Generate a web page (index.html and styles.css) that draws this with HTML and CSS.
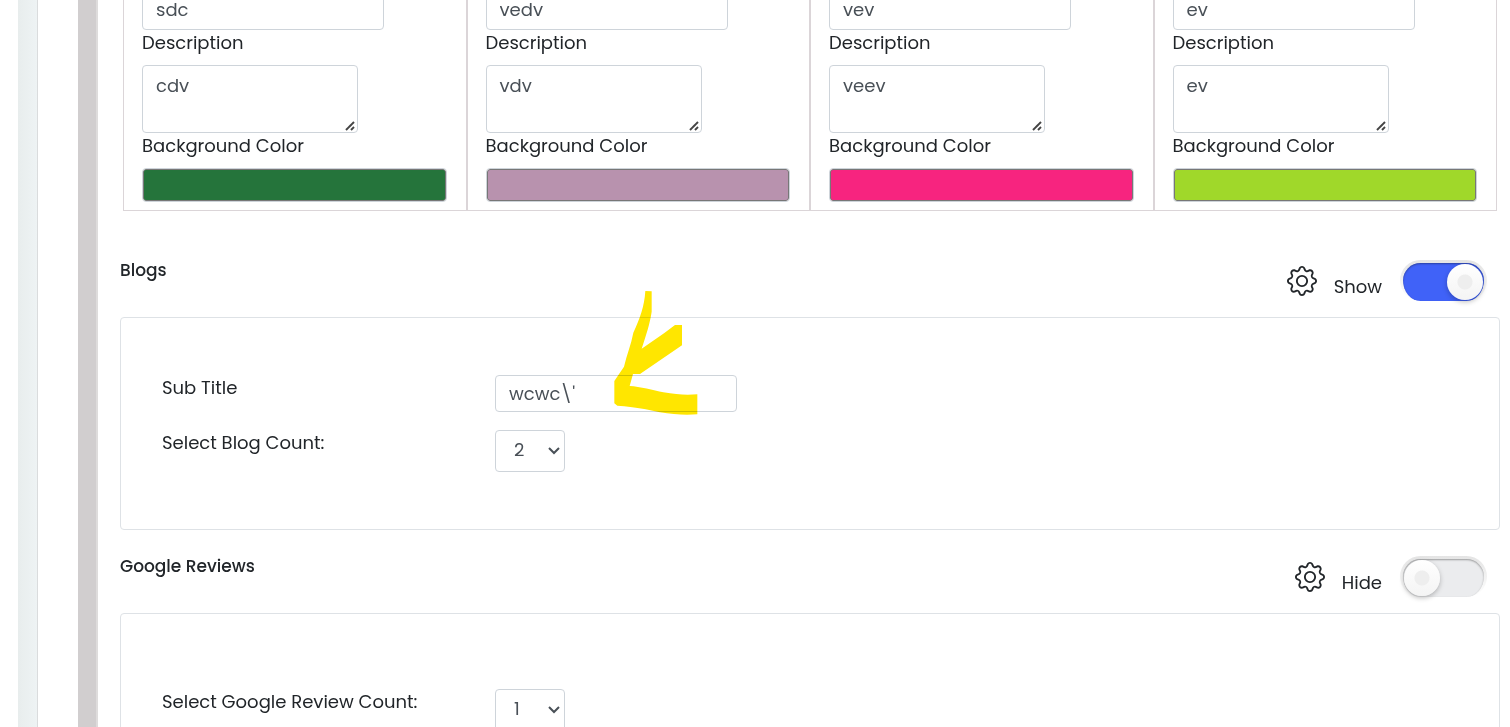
FILE: index.html
```html
<!DOCTYPE html>
<html lang="en">
<head>
  <meta charset="UTF-8" />
  <title>Home Page Settings</title>
  <link rel="stylesheet" href="styles.css">
</head>
<body>
  <svg class="icon-defs" aria-hidden="true">
    <symbol id="gear" viewBox="0 0 16 16">
      <path d="M8 4.754a3.246 3.246 0 1 0 0 6.492 3.246 3.246 0 0 0 0-6.492M5.754 8a2.246 2.246 0 1 1 4.492 0 2.246 2.246 0 0 1-4.492 0"/>
      <path d="M9.796 1.343c-.527-1.79-3.065-1.79-3.592 0l-.094.319a.873.873 0 0 1-1.255.52l-.292-.16c-1.64-.892-3.433.902-2.54 2.541l.159.292a.873.873 0 0 1-.52 1.255l-.319.094c-1.79.527-1.79 3.065 0 3.592l.319.094a.873.873 0 0 1 .52 1.255l-.16.292c-.892 1.64.901 3.434 2.541 2.54l.292-.159a.873.873 0 0 1 1.255.52l.094.319c.527 1.79 3.065 1.79 3.592 0l.094-.319a.873.873 0 0 1 1.255-.52l.292.16c1.64.893 3.434-.902 2.54-2.541l-.159-.292a.873.873 0 0 1 .52-1.255l.319-.094c1.79-.527 1.79-3.065 0-3.592l-.319-.094a.873.873 0 0 1-.52-1.255l.16-.292c.893-1.64-.902-3.433-2.541-2.54l-.292.159a.873.873 0 0 1-1.255-.52zm-2.633.283c.246-.835 1.428-.835 1.674 0l.094.319a1.873 1.873 0 0 0 2.693 1.115l.291-.16c.764-.415 1.6.42 1.184 1.185l-.159.292a1.873 1.873 0 0 0 1.116 2.692l.318.094c.835.246.835 1.428 0 1.674l-.319.094a1.873 1.873 0 0 0-1.115 2.693l.16.291c.415.764-.42 1.6-1.185 1.184l-.291-.159a1.873 1.873 0 0 0-2.693 1.116l-.094.318c-.246.835-1.428.835-1.674 0l-.094-.319a1.873 1.873 0 0 0-2.692-1.115l-.292.16c-.764.415-1.6-.42-1.184-1.185l.159-.291A1.873 1.873 0 0 0 1.945 8.93l-.319-.094c-.835-.246-.835-1.428 0-1.674l.319-.094A1.873 1.873 0 0 0 3.06 4.377l-.16-.292c-.415-.764.42-1.6 1.185-1.184l.292.159a1.873 1.873 0 0 0 2.692-1.115z"/>
    </symbol>
  </svg>

  <div class="page">
    <div class="rail"></div>
    <div class="divider"></div>

    <main class="content">
      <div class="cards">
        <div class="card">
          <input type="text" class="input-field title-field" aria-label="Title 1" value="sdc" />
          <label for="description1">Description</label>
          <textarea id="description1" class="input-field text-area">cdv</textarea>
          <label for="color1">Background Color</label>
          <input type="color" id="color1" class="color-field" value="#25743b" />
        </div>
        <div class="card">
          <input type="text" class="input-field title-field" aria-label="Title 2" value="vedv" />
          <label for="description2">Description</label>
          <textarea id="description2" class="input-field text-area">vdv</textarea>
          <label for="color2">Background Color</label>
          <input type="color" id="color2" class="color-field" value="#b892ae" />
        </div>
        <div class="card">
          <input type="text" class="input-field title-field" aria-label="Title 3" value="vev" />
          <label for="description3">Description</label>
          <textarea id="description3" class="input-field text-area">veev</textarea>
          <label for="color3">Background Color</label>
          <input type="color" id="color3" class="color-field" value="#f7247f" />
        </div>
        <div class="card">
          <input type="text" class="input-field title-field" aria-label="Title 4" value="ev" />
          <label for="description4">Description</label>
          <textarea id="description4" class="input-field text-area">ev</textarea>
          <label for="color4">Background Color</label>
          <input type="color" id="color4" class="color-field" value="#a0d82a" />
        </div>
      </div>

      <section>
        <div class="section-head">
          <h2>Blogs</h2>
          <div class="controls">
            <button type="button" class="gear-button" aria-label="Blogs settings"><svg><use href="#gear"/></svg></button>
            <label for="blogsToggle">Show</label>
            <input type="checkbox" id="blogsToggle" class="toggle" checked />
          </div>
        </div>
        <div class="panel">
          <div class="row">
            <label for="subTitle">Sub Title</label>
            <div class="marked">
              <input type="text" id="subTitle" class="input-field" value="wcwc\'" />
              <svg class="marker" viewBox="396 24 264 390" aria-hidden="true">
                <path d="M496 33L515 34L515 95C510 130 497 170 485 206L552 160L585 135L606 135L606 196L480 282L459 282L449 318C480 320 520 330 550 337C590 344 620 346 652 343L652 403C620 406 580 404 540 397C500 388 470 381 412 377L403 370L403 303L432 260C440 225 453 195 460 158C480 115 493 80 496 33Z"/>
              </svg>
            </div>
          </div>
          <div class="row">
            <label for="blogCount">Select Blog Count:</label>
            <select id="blogCount" class="input-field count">
              <option>1</option>
              <option selected>2</option>
              <option>3</option>
            </select>
          </div>
        </div>
      </section>

      <section>
        <div class="section-head">
          <h2>Google Reviews</h2>
          <div class="controls">
            <button type="button" class="gear-button" aria-label="Google Reviews settings"><svg><use href="#gear"/></svg></button>
            <label for="reviewsToggle">Hide</label>
            <input type="checkbox" id="reviewsToggle" class="toggle" />
          </div>
        </div>
        <div class="panel panel-reviews">
          <div class="row">
            <label for="reviewCount">Select Google Review Count:</label>
            <select id="reviewCount" class="input-field count">
              <option selected>1</option>
              <option>2</option>
              <option>3</option>
            </select>
          </div>
        </div>
      </section>
    </main>
  </div>
</body>
</html>
```

FILE: styles.css
```css
* {
  box-sizing: border-box;
}

body {
  margin: 0;
  height: 100vh;
  overflow: hidden;
  background-color: #fff;
  color: #212529;
  font-family: Poppins, Inter, sans-serif;
  font-size: 18px;
  line-height: 26px;
}

.icon-defs {
  display: none;
}

.page {
  display: flex;
  height: 100vh;
  overflow: hidden;
}

.rail {
  flex: none;
  width: 20px;
  margin: 0 40px 0 18px;
  background: linear-gradient(to right, #e8eded, #eef3f4);
  border-right: 1px solid #dadcdd;
}

.divider {
  flex: none;
  width: 20px;
  background-color: #d1cecf;
  border-right: 2px solid #dedcdc;
}

.content {
  flex: 1;
  min-width: 0;
  padding: 0 10px 0 22px;
}

/* the row of cards runs off the top of the window */
.cards {
  display: grid;
  grid-template-columns: repeat(4, 1fr);
  margin: -13px 3px 23px;
}

.card {
  display: flex;
  flex-direction: column;
  align-items: flex-start;
  padding: 0 19px 8px 18px;
  border: 1px solid #dbd5d8;
}

.input-field {
  display: block;
  width: 242px;
  height: 37px;
  padding: 5px 13px;
  border: 1px solid #ced4da;
  border-radius: 4px;
  background-color: #fff;
  color: #495057;
  font: inherit;
}

.title-field {
  height: 42px;
}

.text-area {
  width: 216px;
  height: 68px;
  margin-top: 9px;
  padding-top: 7px;
}

.text-area::-webkit-resizer {
  background: url("data:image/svg+xml,%3Csvg xmlns='http://www.w3.org/2000/svg' viewBox='0 0 15 15'%3E%3Cpath d='M4 13l8-8M9 13l3-3' fill='none' stroke='%23444' stroke-width='2' stroke-dasharray='3 0'/%3E%3C/svg%3E") center / 15px 15px no-repeat;
}

.color-field {
  width: 100%;
  height: 34px;
  margin-top: 9px;
  padding: 0;
  border: 1px solid #ced4da;
  border-radius: 4px;
  background-color: #fff;
}

.color-field::-webkit-color-swatch-wrapper {
  padding: 0;
}

.color-field::-webkit-color-swatch {
  border: 1px solid #777;
  border-radius: 3px;
}

.section-head {
  display: flex;
  justify-content: space-between;
  align-items: flex-start;
  padding: 23px 13px 16px 0;
}

h2 {
  margin: 0;
  font-size: 17px;
  font-weight: 500;
  line-height: 26px;
}

.controls {
  display: flex;
  align-items: center;
  margin-top: 3px;
}

.controls label {
  padding-top: 12px;
  margin: 0 18px 0 17px;
}

.gear-button {
  display: flex;
  padding: 0;
  border: none;
  background: none;
  color: #212529;
  cursor: pointer;
}

.gear-button svg {
  width: 30px;
  height: 30px;
  fill: currentColor;
}

.toggle {
  appearance: none;
  width: 87px;
  height: 41px;
  margin: 0;
  border: 3px solid transparent;
  border-bottom-width: 0;
  border-radius: 21px;
  background:
    linear-gradient(#ebecee, #ebecee) padding-box,
    linear-gradient(#e4e4e4, #fff) border-box;
  box-shadow: inset 0 1px 2px rgba(0, 0, 0, 0.35);
  cursor: pointer;
}

.toggle::before {
  content: "";
  display: block;
  width: 36px;
  height: 36px;
  margin: 1px;
  border-radius: 50%;
  background:
    radial-gradient(circle, #eee 7px, transparent 8px),
    linear-gradient(#fff, #f4f4f4);
  box-shadow: 0 2px 5px rgba(0, 0, 0, 0.25);
}

.toggle:checked {
  background:
    linear-gradient(#4062f8, #4062f8) padding-box,
    linear-gradient(#e4e4e4, #fff) border-box;
}

.toggle:checked::before {
  margin-left: auto;
}

.panel {
  display: flex;
  flex-direction: column;
  gap: 18px;
  padding: 57px 41px;
  border: 1px solid #dee2e6;
  border-radius: 4px;
}

.panel-reviews {
  padding-top: 75px;
}

.row {
  display: grid;
  grid-template-columns: 333px 1fr;
  align-items: start;
}

.count {
  appearance: none;
  width: 70px;
  height: 42px;
  padding: 4px 18px 6px;
  background: #fff url("data:image/svg+xml,%3Csvg xmlns='http://www.w3.org/2000/svg' viewBox='0 0 12 8'%3E%3Cpath d='M1 1l5 5 5-5' fill='none' stroke='%23495057' stroke-width='2'/%3E%3C/svg%3E") right 4px center / 12px 8px no-repeat;
}

.marked {
  position: relative;
}

/* yellow highlighter arrow drawn over the form */
.marker {
  position: absolute;
  top: -87px;
  left: 117px;
  width: 88px;
  height: 130px;
  fill: #ffe600;
  mix-blend-mode: multiply;
  pointer-events: none;
}
```
